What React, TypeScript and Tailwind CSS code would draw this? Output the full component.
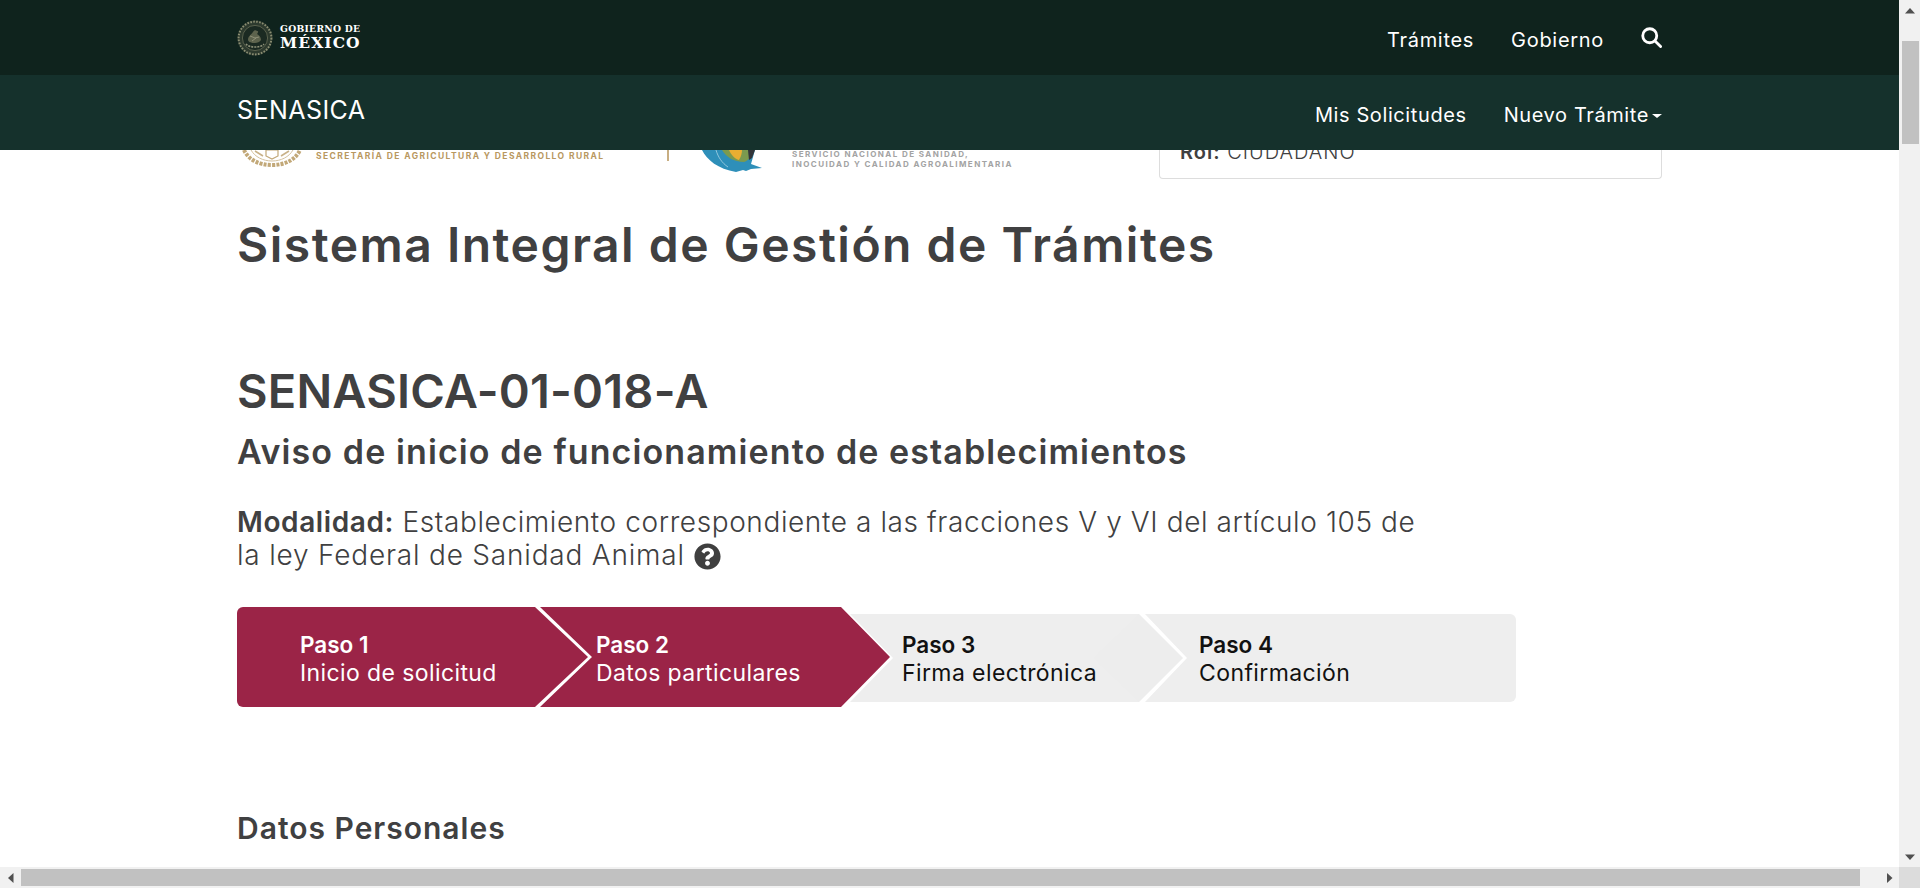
import React from "react";
import { FaQuestionCircle } from "react-icons/fa";

function TopEmblem() {
  return (
    <svg viewBox="0 0 36 36" className="w-[36px] h-[36px] shrink-0">
      <circle cx="18" cy="18" r="17.5" fill="#2d3a2e" />
      <circle cx="18" cy="18" r="16.4" fill="none" stroke="#8a8d72" strokeWidth="2" strokeDasharray="1.6 1.4" />
      <circle cx="18" cy="18" r="12.6" fill="#1b2a22" stroke="#666c55" strokeWidth="0.8" />
      <path d="M9 24c3 4 15 4 18 0" stroke="#8f9279" strokeWidth="1.6" strokeDasharray="2 1" fill="none" />
      <path d="M11 20c0-4 3-5 5-8 1-2 3-2 4-1 2 0 1 2 0 3 2 1 4 3 4 6-1 2-4 3-6 3-3 0-6 0-7-3z" fill="#5d634d" />
      <path d="M13 16l5 2 4-1M15 21l4-3" stroke="#9a9c82" strokeWidth="0.8" fill="none" />
    </svg>
  );
}

function GoldEmblem() {
  return (
    <svg viewBox="0 0 62 19" className="w-[62px] h-[19px] shrink-0 ml-[4px]">
      <path d="M3 0C7 9 17 15 31 15S55 9 59 0" fill="none" stroke="#c2a878" strokeWidth="4" strokeDasharray="3 1.2" />
      <path d="M10 0C14 7 22 11 31 11S48 7 52 0" fill="none" stroke="#d4c19e" strokeWidth="1" />
      <path d="M25 0h12v6l-6 3-6-3z" fill="none" stroke="#c2a878" strokeWidth="1.2" />
      <path d="M14 1l8 5M48 1l-8 5" stroke="#c9b289" strokeWidth="1.6" />
    </svg>
  );
}

function Feather() {
  return (
    <svg viewBox="0 0 60 23" className="w-[60px] h-[23px] shrink-0">
      <path d="M0 0C5 10 16 19 34 22L41 20L44 21L49 19L60 18L49 14L53 0Z" fill="#2e8fb9" />
      <path d="M20 0C24 7 32 12 42 12C47 10 50 6 52 0Z" fill="#7b9a4f" />
      <path d="M27 0C29 5 33 9 37 10C39 7 40 3 40 0Z" fill="#e9ae32" />
      <path d="M46 0L47 10L50 8L53 0Z" fill="#33353a" />
      <path d="M14 0C16 7 20 13 26 17" stroke="#b9dceb" strokeWidth="0.7" fill="none" />
    </svg>
  );
}

function Triangle({ d }: { d: string }) {
  return (
    <svg viewBox="0 0 10 10" className="w-[10px] h-[10px]">
      <path d={d} fill="#505050" />
    </svg>
  );
}

function StepText({ title, sub, dark }: { title: string; sub: string; dark?: boolean }) {
  return (
    <div className={dark ? "text-[#111111] pt-[1px]" : "text-white pt-[3px]"}>
      <div className="text-[22.5px] leading-[28px] font-semibold">{title}</div>
      <div className="text-[23px] leading-[28px] tracking-[0.4px]">{sub}</div>
    </div>
  );
}

export default function App() {
  return (
    <div className="h-[888px] w-[1920px] flex flex-col overflow-hidden bg-white font-['Inter',sans-serif]">
      <div className="flex h-[867px] shrink-0">
        <div className="w-[1899px] flex flex-col overflow-hidden">
          <div className="h-[75px] bg-[#0f231d] shrink-0 pl-[237px] pr-[237px] flex items-center justify-between">
            <div className="flex items-center gap-[7px]">
              <TopEmblem />
              <div className="font-['DejaVu_Serif',serif] text-white font-bold leading-none">
                <div className="text-[9.2px] tracking-[0.3px]">GOBIERNO DE</div>
                <div className="text-[15.5px] tracking-[1.1px] mt-[2px]">MÉXICO</div>
              </div>
            </div>
            <div className="flex items-center text-white text-[20px] tracking-[0.7px]">
              <span className="pt-[4px]">Trámites</span>
              <span className="ml-[37px] pt-[4px]">Gobierno</span>
              <svg viewBox="0 0 24 24" className="ml-[37px] w-[21px] h-[21px]" fill="none" stroke="white" strokeWidth="3.2" strokeLinecap="round">
                <circle cx="10" cy="10" r="8" />
                <path d="M16 16L22.4 22.4" />
              </svg>
            </div>
          </div>
          <div className="h-[75px] bg-[#15312c] shrink-0 pl-[237px] pr-[237px] flex justify-between text-white">
            <div className="text-[25px] leading-[30px] pt-[20px] tracking-[0.45px]">SENASICA</div>
            <div className="flex text-[20px] leading-[24px] pt-[28px] tracking-[0.6px]">
              <span>Mis Solicitudes</span>
              <span className="ml-[37px]">Nuevo Trámite</span>
              <span className="mt-[11px] ml-[3px] w-0 h-0 border-x-[5px] border-x-transparent border-t-[4px] border-t-white" />
            </div>
          </div>

          <div className="h-[30px] shrink-0 overflow-hidden flex pl-[237px]">
            <div className="w-[922px] flex shrink-0">
              <GoldEmblem />
              <div className="ml-[13px] mt-[1px] w-[351px] text-[8.5px] leading-[10px] font-bold tracking-[1.4px] text-[#b9985f] whitespace-nowrap">
                SECRETARÍA DE AGRICULTURA Y DESARROLLO RURAL
              </div>
              <div className="w-[2px] h-[11px] bg-[#c8ae82]" />
              <div className="ml-[33px]"><Feather /></div>
              <div className="ml-[30px] mt-[-1px] text-[8px] leading-[10px] font-bold tracking-[1.43px] text-[#a3a3a3] whitespace-nowrap">
                <div>SERVICIO NACIONAL DE SANIDAD,</div>
                <div>INOCUIDAD Y CALIDAD AGROALIMENTARIA</div>
              </div>
            </div>
            <div className="w-[503px] h-[29px] border border-t-0 border-[#dddddd] rounded-b-[4px] pl-[20px] overflow-hidden">
              <div className="mt-[-10px] text-[20px] leading-[24px] text-[#404041] tracking-[1px]">
                <span className="font-semibold">Rol:</span> <span className="font-light">CIUDADANO</span>
              </div>
            </div>
          </div>

          <div className="pl-[237px] text-[#404041]">
            <h1 className="mt-[36px] h-[58px] text-[48px] leading-[58px] font-semibold tracking-[1.5px] whitespace-nowrap">Sistema Integral de Gestión de Trámites</h1>
            <h2 className="mt-[88px] h-[58px] text-[47px] leading-[58px] font-semibold tracking-[0.2px] whitespace-nowrap">SENASICA-01-018-A</h2>
            <h3 className="mt-[12px] h-[40px] text-[34px] leading-[40px] font-semibold tracking-[1.1px] whitespace-nowrap">Aviso de inicio de funcionamiento de establecimientos</h3>
            <div className="mt-[34px] text-[28px] leading-[32.5px] tracking-[0.6px] whitespace-nowrap">
              <span className="font-semibold">Modalidad:</span>{" "}
              <span className="font-light">Establecimiento correspondiente a las fracciones V y VI del artículo 105 de</span>
              <br />
              <span className="font-light tracking-[0.8px]">la ley Federal de Sanidad Animal</span>
              <FaQuestionCircle className="inline-block ml-[9px] w-[27px] h-[27px] align-[-5px] text-[#3f3f3f]" />
            </div>

            <div className="mt-[36px] h-[100px] flex items-center">
              <div className="w-[351px] h-[100px] shrink-0 bg-[#9b2447] rounded-l-[6px] pl-[63px] flex items-center [clip-path:polygon(0_0,298px_0,100%_50%,298px_100%,0_100%)]">
                <StepText title="Paso 1" sub="Inicio de solicitud" />
              </div>
              <div className="w-[350px] h-[100px] shrink-0 ml-[-48px] bg-[#9b2447] pl-[56px] flex items-center [clip-path:polygon(0_0,301px_0,100%_50%,301px_100%,0_100%,52px_50%)]">
                <StepText title="Paso 2" sub="Datos particulares" />
              </div>
              <div className="relative w-[333px] h-[88px] mt-[2px] shrink-0 ml-[-40px] bg-[#eeeeee] pl-[52px] flex items-center [clip-path:polygon(0_0,289px_0,100%_50%,289px_100%,0_100%,43px_50%)]">
                <div className="absolute inset-0 bg-[#ededed] [clip-path:polygon(243px_50%,289px_0,100%_50%,289px_100%)]" />
                <div className="relative"><StepText dark title="Paso 3" sub="Firma electrónica" /></div>
              </div>
              <div className="w-[371px] h-[88px] mt-[2px] shrink-0 ml-[-38px] bg-[#eeeeee] rounded-r-[6px] pl-[54px] flex items-center [clip-path:polygon(0_0,100%_0,100%_100%,0_100%,42px_50%)]">
                <StepText dark title="Paso 4" sub="Confirmación" />
              </div>
            </div>

            <h4 className="mt-[103px] h-[36px] text-[30px] leading-[36px] font-semibold tracking-[1px]">Datos Personales</h4>
          </div>
        </div>

        <div className="w-[21px] bg-[#f1f1f1] flex flex-col items-center shrink-0">
          <div className="h-[21px] flex items-center justify-center shrink-0"><Triangle d="M5 2L10 7.5H0Z" /></div>
          <div className="mt-[20px] ml-[1px] w-[17px] h-[103px] bg-[#c1c1c1]" />
          <div className="mt-auto h-[21px] flex items-center justify-center shrink-0"><Triangle d="M0 2.5H10L5 8Z" /></div>
        </div>
      </div>

      <div className="h-[21px] flex bg-[#f1f1f1] shrink-0">
        <div className="w-[21px] flex items-center justify-center shrink-0"><Triangle d="M2 5L7.5 0V10Z" /></div>
        <div className="my-[2px] w-[1839px] bg-[#c1c1c1] shrink-0" />
        <div className="w-[39px] flex items-center justify-end pr-[5px] shrink-0"><Triangle d="M3 0L8.5 5L3 10Z" /></div>
        <div className="w-[21px] bg-[#dcdcdc] shrink-0" />
      </div>
    </div>
  );
}
